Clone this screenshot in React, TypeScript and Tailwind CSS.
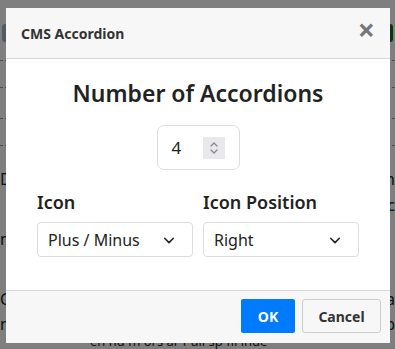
import React from 'react';

const font = { fontFamily: '"Noto Sans", "Open Sans", sans-serif' };

const Chevron = () => (
  <svg width="14" height="14" viewBox="0 0 16 16" fill="none" stroke="#222" strokeWidth="1.8" strokeLinecap="round" strokeLinejoin="round">
    <path d="M3 6l5 5 5-5" />
  </svg>
);

const Spinner = () => (
  <div className="w-[22px] h-[22px] bg-[#e9e9ed] flex items-center justify-center">
    <svg width="12" height="18" viewBox="0 0 12 18" fill="none" stroke="#888" strokeWidth="1.3" strokeLinecap="round" strokeLinejoin="round">
      <path d="M3 7l3-3 3 3" />
      <path d="M3 11l3 3 3-3" />
    </svg>
  </div>
);

export default function App() {
  return (
    <div className="relative w-[395px] h-[349px] overflow-hidden bg-white" style={font}>
      {/* Page behind the dialog */}
      <div className="w-[395px] h-[349px] text-[16px] text-[#222] leading-[22px]">
        <div className="flex justify-between items-center pt-[24px] px-[2px]">
          <div className="w-[10px] h-[18px] rounded-[3px] bg-[#9fb7cf]" />
          <div className="w-[10px] h-[18px] rounded-[3px] bg-[#0b6b2c]" />
        </div>
        <div className="mt-[18px] border-t border-dashed border-[#999]" />
        <div className="mt-[26px] border-t border-dashed border-[#999]" />
        <div className="mt-[30px] border-t border-dashed border-[#999]" />
        <div className="mt-[26px] border-t border-dashed border-[#999]" />
        <div className="mt-[22px] flex justify-between"><span>Do</span><span>on</span></div>
        <div className="mt-[4px] flex justify-end"><span>c</span></div>
        <div className="mt-[12px] flex justify-between"><span>nt</span><span> </span></div>
        <div className="mt-[38px] flex justify-between"><span>Co</span><span>a</span></div>
        <div className="mt-[3px] flex justify-between"><span>ns</span><span>b</span></div>
        <div className="-mt-[2px] pl-[90px] whitespace-nowrap text-[13px] leading-[16px]">en nd m ors ar f ull sp fil inde</div>
      </div>
      <div className="absolute inset-0 bg-black/50" />

      {/* Dialog */}
      <div className="absolute left-[6px] top-[8px] w-[384px] h-[335px] bg-white flex flex-col">
        <div className="h-[51px] bg-[#f7f7f7] border-b border-[#d9d9d9] flex items-center justify-between pl-[15px] pr-[15px]">
          <span className="text-[14px] font-bold text-[#333]">CMS Accordion</span>
          <span className="text-[30px] font-bold text-[#777] leading-none -mt-[6px]">×</span>
        </div>

        <div className="flex-1 flex flex-col items-center px-[31px]">
          <h1 className="mt-[19px] text-[23px] leading-[30px] font-semibold text-[#222]">Number of Accordions</h1>
          <div className="mt-[17px] w-[83px] h-[45px] border border-[#ddd] rounded-[7px] flex items-center pl-[14px] pr-[14px] justify-between">
            <span className="text-[17px] text-[#222]">4</span>
            <Spinner />
          </div>
          <div className="mt-[20px] w-full grid grid-cols-2 gap-[10px]">
            <div>
              <div className="text-[18px] leading-[24px] font-semibold text-[#222]">Icon</div>
              <div className="mt-[8px] h-[35px] border border-[#ddd] rounded-[4px] flex items-center justify-between pl-[10px] pr-[16px]">
                <span className="text-[16px] text-[#222]">Plus / Minus</span>
                <Chevron />
              </div>
            </div>
            <div>
              <div className="text-[18px] leading-[24px] font-semibold text-[#222]">Icon Position</div>
              <div className="mt-[8px] h-[35px] border border-[#ddd] rounded-[4px] flex items-center justify-between pl-[10px] pr-[16px]">
                <span className="text-[16px] text-[#222]">Right</span>
                <Chevron />
              </div>
            </div>
          </div>
        </div>

        <div className="h-[53px] bg-[#f7f7f7] border-t border-[#d9d9d9] flex items-start justify-end gap-[7px] pt-[8px] pr-[9px]">
          <button className="w-[54px] h-[34px] bg-[#007bff] rounded-[2px] text-white text-[14px] font-bold">OK</button>
          <button className="w-[79px] h-[34px] bg-[#f7f7f7] border border-[#ccc] rounded-[3px] text-[#333] text-[14px] font-bold">Cancel</button>
        </div>
      </div>
    </div>
  );
}
